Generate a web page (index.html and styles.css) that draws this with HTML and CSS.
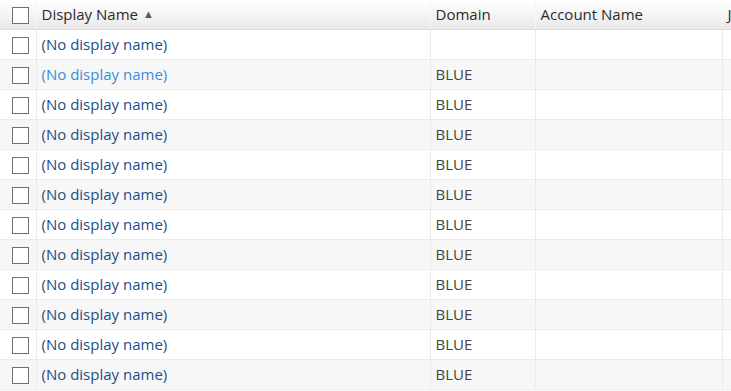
FILE: index.html
```html
<!DOCTYPE html>
<html lang="en">
<head>
    <meta charset="UTF-8">
    <title>Users</title>
    <link rel="stylesheet" href="styles.css">
</head>
<body>
    <table class="grid">
        <colgroup>
            <col class="c-check">
            <col class="c-name">
            <col class="c-domain">
            <col class="c-account">
            <col class="c-rest">
        </colgroup>
        <thead>
            <tr>
                <th><span class="box"></span></th>
                <th>Display Name <span class="sort">&#9650;</span></th>
                <th>Domain</th>
                <th>Account Name</th>
                <th>J</th>
            </tr>
        </thead>
        <tbody>
            <tr><td><span class="box"></span></td><td><a href="#">(No display name)</a></td><td></td><td></td><td></td></tr>
            <tr class="hover"><td><span class="box"></span></td><td><a href="#">(No display name)</a></td><td>BLUE</td><td></td><td></td></tr>
            <tr><td><span class="box"></span></td><td><a href="#">(No display name)</a></td><td>BLUE</td><td></td><td></td></tr>
            <tr><td><span class="box"></span></td><td><a href="#">(No display name)</a></td><td>BLUE</td><td></td><td></td></tr>
            <tr><td><span class="box"></span></td><td><a href="#">(No display name)</a></td><td>BLUE</td><td></td><td></td></tr>
            <tr><td><span class="box"></span></td><td><a href="#">(No display name)</a></td><td>BLUE</td><td></td><td></td></tr>
            <tr><td><span class="box"></span></td><td><a href="#">(No display name)</a></td><td>BLUE</td><td></td><td></td></tr>
            <tr><td><span class="box"></span></td><td><a href="#">(No display name)</a></td><td>BLUE</td><td></td><td></td></tr>
            <tr><td><span class="box"></span></td><td><a href="#">(No display name)</a></td><td>BLUE</td><td></td><td></td></tr>
            <tr><td><span class="box"></span></td><td><a href="#">(No display name)</a></td><td>BLUE</td><td></td><td></td></tr>
            <tr><td><span class="box"></span></td><td><a href="#">(No display name)</a></td><td>BLUE</td><td></td><td></td></tr>
            <tr><td><span class="box"></span></td><td><a href="#">(No display name)</a></td><td>BLUE</td><td></td><td></td></tr>
        </tbody>
    </table>
</body>
</html>
```

FILE: styles.css
```css
body {
    margin: 0;
    padding: 0;
    background-color: #fff;
    font-family: "Open Sans", "Noto Sans", sans-serif;
    font-size: 15px;
    overflow: hidden;
}

.grid {
    border-collapse: collapse;
    table-layout: fixed;
    width: 760px;
}

.c-check { width: 36px; }
.c-name { width: 394px; }
.c-domain { width: 105px; }
.c-account { width: 187px; }
.c-rest { width: 38px; }

.grid th {
    height: 28px;
    padding: 0 4px 1px 5px;
    text-align: left;
    font-weight: normal;
    color: #2b2b2b;
    background: linear-gradient(#ffffff, #e9e9e9);
    border-left: 1px solid #f6f6f6;
    border-bottom: 1px solid #e0e0e0;
    white-space: nowrap;
}

.grid td {
    height: 28px;
    padding: 0 4px 1px 5px;
    color: #444;
    border-left: 1px solid #ebebeb;
    border-bottom: 1px solid #ebebeb;
    white-space: nowrap;
}

.grid tr th:first-child,
.grid tr td:first-child {
    border-left: none;
    padding: 1px 0 0 12px;
}

.grid tbody tr:nth-child(even) td {
    background-color: #f7f7f7;
}

.box {
    display: block;
    width: 15px;
    height: 15px;
    border: 1px solid #707070;
    background-color: #fff;
}

.sort {
    font-size: 11px;
    color: #555;
    margin-left: 1px;
    position: relative;
    top: -2px;
}

.grid a {
    color: #1c4f86;
    text-decoration: none;
}

.grid tr.hover a {
    color: #3a8fd6;
}
```
